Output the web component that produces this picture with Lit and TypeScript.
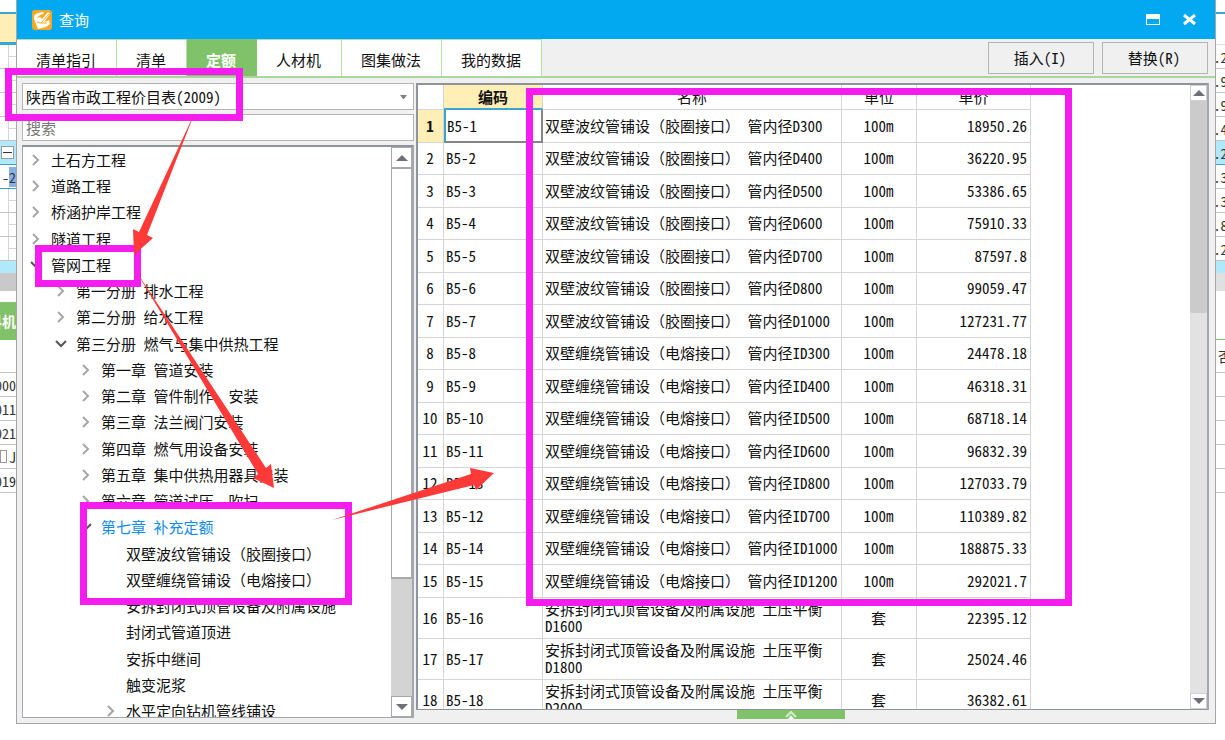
import { LitElement, html, css, svg, nothing } from "lit";
import { customElement, property } from "lit/decorators.js";
import { classMap } from "lit/directives/class-map.js";

type Row = { code: string; name: string; unit: string; price: string };
type Node = { text: string; level: number; state?: "open" | "closed"; active?: boolean };

const FONT = css`"Noto Sans Mono CJK SC", "Noto Sans CJK SC", "Liberation Mono", monospace`;

const corrugated = (d: string) => `双壁波纹管铺设（胶圈接口） 管内径${d}`;
const wound = (d: string) => `双壁缠绕管铺设（电熔接口） 管内径${d}`;
const jacking = (d: string) => `安拆封闭式顶管设备及附属设施 土压平衡 ${d}`;

const ROWS: Row[] = [
  { code: "B5-1", name: corrugated("D300"), unit: "100m", price: "18950.26" },
  { code: "B5-2", name: corrugated("D400"), unit: "100m", price: "36220.95" },
  { code: "B5-3", name: corrugated("D500"), unit: "100m", price: "53386.65" },
  { code: "B5-4", name: corrugated("D600"), unit: "100m", price: "75910.33" },
  { code: "B5-5", name: corrugated("D700"), unit: "100m", price: "87597.8" },
  { code: "B5-6", name: corrugated("D800"), unit: "100m", price: "99059.47" },
  { code: "B5-7", name: corrugated("D1000"), unit: "100m", price: "127231.77" },
  { code: "B5-8", name: wound("ID300"), unit: "100m", price: "24478.18" },
  { code: "B5-9", name: wound("ID400"), unit: "100m", price: "46318.31" },
  { code: "B5-10", name: wound("ID500"), unit: "100m", price: "68718.14" },
  { code: "B5-11", name: wound("ID600"), unit: "100m", price: "96832.39" },
  { code: "B5-13", name: wound("ID800"), unit: "100m", price: "127033.79" },
  { code: "B5-12", name: wound("ID700"), unit: "100m", price: "110389.82" },
  { code: "B5-14", name: wound("ID1000"), unit: "100m", price: "188875.33" },
  { code: "B5-15", name: wound("ID1200"), unit: "100m", price: "292021.7" },
  { code: "B5-16", name: jacking("D1600"), unit: "套", price: "22395.12" },
  { code: "B5-17", name: jacking("D1800"), unit: "套", price: "25024.46" },
  { code: "B5-18", name: jacking("D2000"), unit: "套", price: "36382.61" },
];

const NODES: Node[] = [
  { text: "土石方工程", level: 1, state: "closed" },
  { text: "道路工程", level: 1, state: "closed" },
  { text: "桥涵护岸工程", level: 1, state: "closed" },
  { text: "隧道工程", level: 1, state: "closed" },
  { text: "管网工程", level: 1, state: "open" },
  { text: "第一分册 排水工程", level: 2, state: "closed" },
  { text: "第二分册 给水工程", level: 2, state: "closed" },
  { text: "第三分册 燃气与集中供热工程", level: 2, state: "open" },
  { text: "第一章 管道安装", level: 3, state: "closed" },
  { text: "第二章 管件制作、安装", level: 3, state: "closed" },
  { text: "第三章 法兰阀门安装", level: 3, state: "closed" },
  { text: "第四章 燃气用设备安装", level: 3, state: "closed" },
  { text: "第五章 集中供热用器具安装", level: 3, state: "closed" },
  { text: "第六章 管道试压、吹扫", level: 3, state: "closed" },
  { text: "第七章 补充定额", level: 3, state: "open", active: true },
  { text: "双壁波纹管铺设（胶圈接口）", level: 4 },
  { text: "双壁缠绕管铺设（电熔接口）", level: 4 },
  { text: "安拆封闭式顶管设备及附属设施", level: 4 },
  { text: "封闭式管道顶进", level: 4 },
  { text: "安拆中继间", level: 4 },
  { text: "触变泥浆", level: 4 },
  { text: "水平定向钻机管线铺设", level: 4, state: "closed" },
];

const TABS = ["清单指引", "清单", "定额", "人材机", "图集做法", "我的数据"];

@customElement("scroll-bar")
class ScrollBar extends LitElement {
  static styles = css`
    :host { display: flex; flex-direction: column; flex: none; width: 17px; background: #e2e2e2; }
    :host([wide]) { width: 21px; background: #d3d3d3; }
    .step {
      flex: none; display: flex; align-items: center; justify-content: center;
      height: 16px; padding: 0; background: #fff; border: 1px solid #d0d0d0; box-sizing: border-box;
    }
    .thumb { background: #cbcbcb; border-radius: 0 0 2px 2px; }
    .track { min-height: 0; }
    :host([wide]) .step { height: 21px; border-color: #a9a9a9; }
    :host([wide]) .thumb { background: #fff; border: 1px solid #a9a9a9; border-bottom-width: 2px; border-radius: 0; box-sizing: border-box; }
    .short { flex: 212 1 0; }
    .rest { flex: 379 1 0; }
    :host([wide]) .short { flex: 410 1 0; }
    :host([wide]) .rest { flex: 118 1 0; }
  `;
  render() {
    return html`
      <button class="step" aria-label="向上滚动">
        <svg width="12" height="6" viewBox="0 0 12 6"><path d="M6 0L12 6H0Z" fill="#6c7078" /></svg>
      </button>
      <div class="thumb short"></div>
      <div class="track rest"></div>
      <button class="step" aria-label="向下滚动">
        <svg width="12" height="6" viewBox="0 0 12 6"><path d="M0 0H12L6 6Z" fill="#6c7078" /></svg>
      </button>
    `;
  }
}

@customElement("chapter-tree")
class ChapterTree extends LitElement {
  static styles = css`
    :host {
      display: flex; flex: 1; min-height: 0; box-sizing: border-box;
      border: 2px solid #a3a8b0; border-top-color: #8e949c; border-left-width: 1px; border-bottom-width: 1px; background: #fff;
    }
    .list { flex: 1; min-width: 0; margin: 0; padding: 0 0 0 7px; list-style: none; overflow: hidden; }
    .item { display: flex; align-items: center; height: 26px; white-space: nowrap; }
    .item:nth-child(4n) { height: 27px; }
    .l2 { padding-left: 25px; }
    .l3 { padding-left: 50px; }
    .l4 { padding-left: 75px; }
    .twisty, .gap { flex: none; width: 21px; height: 20px; }
    .twisty { display: flex; align-items: center; padding: 0; border: 0; background: none; }
    .active { color: #0f8cf0; }
  `;
  render() {
    return html`
      <ul class="list" role="tree">
        ${NODES.map((n) => html`
          <li class="item l${n.level}" role="treeitem" aria-level=${n.level}
              aria-expanded=${n.state ? String(n.state === "open") : nothing}>
            ${n.state
              ? html`<button class="twisty" aria-label=${n.state === "open" ? "折叠" : "展开"}>
                  <svg width="12" height="12" viewBox="0 0 12 12" fill="none" stroke-width="2">
                    ${n.state === "open"
                      ? svg`<path d="M1 3L6 8L11 3" stroke="#555" />`
                      : svg`<path d="M3 1L8 6L3 11" stroke="#a6a6a6" />`}
                  </svg>
                </button>`
              : html`<span class="gap"></span>`}
            <span class=${classMap({ active: !!n.active })}>${n.text}</span>
          </li>`)}
      </ul>
      <scroll-bar wide></scroll-bar>
    `;
  }
}

@customElement("price-grid")
class PriceGrid extends LitElement {
  static styles = css`
    :host {
      display: flex; flex: 1; min-width: 0; min-height: 0; box-sizing: border-box; background: #fff;
      border: 2px solid #8e949c; border-bottom-width: 1px; border-right-color: #a3a8b0;
    }
    .view { flex: 1; min-width: 0; overflow: hidden; }
    .grid { table-layout: fixed; width: 613px; border-collapse: separate; border-spacing: 0; line-height: 17px; }
    .c-num { width: 26px; }
    .c-code { width: 99px; }
    .c-name { width: 299px; }
    .c-unit { width: 75px; }
    .c-price { width: 114px; }
    th, td { box-sizing: border-box; padding: 0 2px 2px; border: 0 solid #d4d4d4; border-width: 0 1px 1px 0; font-weight: 400; }
    th { height: 25px; }
    td { height: 33px; }
    .even td { height: 32px; }
    .tall td { height: 41px; }
    .num, .unit { text-align: center; padding: 0 1px 2px 0; }
    .name { text-align: left; }
    .price { text-align: right; padding-right: 3px; }
    .on { background: #ffeeb5; font-weight: 700; }
    th.on { border-bottom: 2px solid #3aa5d0; padding-bottom: 0; }
    td.cursor { border-left: 2px solid #3aa5d0; border-right: 2px solid #858585; border-bottom: 2px solid #858585; padding: 0 0 0 1px; }
  `;
  render() {
    return html`
      <div class="view">
        <table class="grid">
          <colgroup>
            <col class="c-num" /><col class="c-code" /><col class="c-name" /><col class="c-unit" /><col class="c-price" />
          </colgroup>
          <thead>
            <tr><th></th><th class="on">编码</th><th>名称</th><th>单位</th><th>单价</th></tr>
          </thead>
          <tbody>
            ${ROWS.map((r, i) => html`
              <tr class=${classMap({ even: i % 2 === 1 && i < 15, tall: i >= 15 })}>
                <td class=${classMap({ num: true, on: i === 0 })}>${i + 1}</td>
                <td class=${classMap({ cursor: i === 0 })}>${r.code}</td>
                <td class="name">${r.name}</td>
                <td class="unit">${r.unit}</td>
                <td class="price">${r.price}</td>
              </tr>`)}
          </tbody>
        </table>
      </div>
      <scroll-bar></scroll-bar>
    `;
  }
}

@customElement("back-strip")
class BackStrip extends LitElement {
  @property() side: "left" | "right" = "left";
  static styles = css`
    :host { display: flex; flex-direction: column; min-width: 0; overflow: hidden; background: #fff; font-size: 14px; color: #333; }
    .cell {
      flex: none; display: flex; align-items: center; justify-content: flex-end; height: 24px; box-sizing: border-box;
      border-bottom: 1px solid #c4c4c4; white-space: nowrap; overflow: hidden;
    }
    .right { justify-content: center; }
    .top { height: 14px; border-bottom: 2px solid #3aa5d0; }
    .head { height: 31px; background: #ffeeb5; border-bottom: 3px solid #3aa5d0; }
    .plain { height: 31px; background: #fff; border-color: #ddd; }
    .tree::after {
      content: ""; width: 7px; height: 24px; border-left: 1px solid #d4d4d4;
      background: linear-gradient(#d4d4d4, #d4d4d4) center / 100% 1px no-repeat;
    }
    .hot { background: #b0e9fb; border-color: #3aa5d0; }
    .sel { border-color: #3aa5d0; }
    .mark { background: #86b0e6; }
    .box { width: 11px; height: 11px; border: 1px solid #999; background: #fff; display: flex; align-items: center; justify-content: center; margin-right: 2px; }
    .dash { width: 9px; height: 1px; background: #333; }
    .cyan { height: 12px; background: #b0e9fb; border: 0; }
    .gray { height: 18px; background: #c9c9c9; border: 0; }
    .gray.right { background: #e0e0e0; }
    .gap { height: 11px; border: 0; }
    .green { height: 38px; background: #80c269; color: #fff; font-weight: 700; border: 0; }
    .gap.right { height: 49px; border-bottom: 1px solid #80c269; }
    .wide { height: 33px; }
    .wide.right { justify-content: flex-start; padding-left: 2px; }
  `;
  render() {
    if (this.side === "right") {
      return html`
        <div class="cell top"></div><div class="cell plain"></div>
        ${[".2", ".9", ".9", ".4"].map((t) => html`<div class="cell right">${t}</div>`)}
        <div class="cell right hot">.2</div>
        ${[".3", ".3", ".8", ".2"].map((t) => html`<div class="cell right">${t}</div>`)}
        <div class="cell cyan"></div><div class="cell gray right"></div>
        <div class="cell gap right"></div>
        <div class="cell wide right">否</div>
        ${[1, 2, 3, 4, 5].map(() => html`<div class="cell"></div>`)}
      `;
    }
    return html`
      <div class="cell top"></div><div class="cell head"></div>
      ${[1, 2, 3, 4].map(() => html`<div class="cell tree"></div>`)}
      <div class="cell hot"><span class="box"><span class="dash"></span></span></div>
      <div class="cell sel">-<span class="mark">2</span></div>
      ${[1, 2, 3].map(() => html`<div class="cell tree"></div>`)}
      <div class="cell cyan"></div><div class="cell gray"></div>
      <div class="cell gap"></div>
      <div class="cell green">料机</div>
      <div class="cell wide"></div>
      ${["000", "011", "021"].map((t) => html`<div class="cell">${t}</div>`)}
      <div class="cell"><span class="box"></span>J</div>
      <div class="cell">019</div>
    `;
  }
}

@customElement("app-root")
class AppRoot extends LitElement {
  static styles = css`
    :host {
      display: grid; grid-template-columns: 16px minmax(0, 1fr) 9px; height: 100vh; position: relative; overflow: hidden;
      box-sizing: border-box; padding-bottom: 16px; background: #fff; color: #111;
      font-family: ${FONT}; font-size: 15px; line-height: 20px;
    }
    .dialog { display: flex; flex-direction: column; min-width: 0; min-height: 0; background: #f0f0f0; border: 1px solid #a6a6a6; border-top: 0; }
    .title { flex: none; display: flex; align-items: center; gap: 7px; height: 39px; padding: 0 18px 0 15px; background: #02a9f1; color: #fff; }
    .caption { flex: 1; margin: 0; font-size: 15px; font-weight: 400; }
    .win { display: flex; padding: 0; border: 0; background: none; margin-left: 14px; }
    .bar { flex: none; display: flex; height: 39px; box-sizing: border-box; padding-right: 7px; border-bottom: 2px solid #a9d69a; }
    .tabs { flex: 1; display: flex; }
    .tab {
      padding: 3px 20px 0 19px; border: 0 solid #b5e0a4; border-width: 1px 1px 0 0; background: #fff;
      font: inherit; color: inherit; white-space: nowrap;
    }
    .tab.current { background: #80c269; border-color: #80c269; color: #fff; font-weight: 700; }
    .actions { display: flex; gap: 8px; padding-top: 3px; }
    .act { width: 106px; height: 32px; padding: 0 2px 0 0; border: 1px solid #b4b4b4; background: #f0f0f0; font: inherit; color: inherit; }
    .main { flex: 1; display: flex; gap: 2px; min-height: 0; padding: 5px 6px 0 5px; }
    .side { flex: none; display: flex; flex-direction: column; gap: 4px; width: 392px; padding-bottom: 5px; }
    .field { position: relative; display: flex; }
    .pick, .find {
      width: 100%; height: 27px; box-sizing: border-box; margin: 0; padding: 0 3px; border: 1px solid #b4b4b4; border-radius: 0;
      background: #fff; font: inherit; color: inherit; appearance: none; outline: none;
    }
    .find::placeholder { color: #777; opacity: 1; }
    .caret { position: absolute; right: 7px; top: 12px; pointer-events: none; }
    .data { flex: 1; display: flex; flex-direction: column; min-width: 0; }
    .foot { flex: none; height: 13px; display: flex; justify-content: center; align-items: flex-start; }
    .pull { display: flex; justify-content: center; width: 108px; height: 9px; margin-right: 44px; padding: 0; border: 0; background: #80c269; }
    .frame { position: absolute; box-sizing: border-box; border: 7px solid #f51cf0; pointer-events: none; }
    .f-book { left: 5px; top: 68px; width: 238px; height: 53px; }
    .f-part { left: 35px; top: 245px; width: 106px; height: 42px; }
    .f-leaf { left: 80px; top: 502px; width: 272px; height: 103px; }
    .f-rows { left: 526px; top: 88px; width: 546px; height: 518px; }
    .arrows { position: absolute; left: 0; top: 0; pointer-events: none; }
  `;
  render() {
    return html`
      <back-strip side="left"></back-strip>
      <section class="dialog" role="dialog" aria-label="查询">
        <header class="title">
          <svg width="20" height="20" viewBox="0 0 20 20">
            <rect width="20" height="20" rx="3" fill="#f7a823" />
            <path d="M2 6C4 3 8 2 12 2L11 4C8 5 6 6 5 8L8 7L10 9L16 2L18 4L12 12L17 10L18 14L14 17L6 19L2 9Z" fill="#fff" />
            <path d="M5 12L9 13L17 4M9 13L15 13" stroke="#f7a823" stroke-width="1" fill="none" />
          </svg>
          <h1 class="caption">查询</h1>
          <button class="win" aria-label="最大化">
            <svg width="15" height="12" viewBox="0 0 15 12"><path d="M0 0H14V11H0ZM1 5V10H13V5Z" fill="#fff" fill-rule="evenodd" /></svg>
          </button>
          <button class="win" aria-label="关闭">
            <svg width="15" height="12" viewBox="0 0 15 12"><path d="M2 1L13 10M13 1L2 10" stroke="#fff" stroke-width="3" /></svg>
          </button>
        </header>
        <div class="bar">
          <nav class="tabs">
            ${TABS.map((t) => html`<button class=${classMap({ tab: true, current: t === "定额" })}>${t}</button>`)}
          </nav>
          <div class="actions">
            <button class="act">插入(I)</button>
            <button class="act">替换(R)</button>
          </div>
        </div>
        <div class="main">
          <div class="side">
            <div class="field">
              <select class="pick" aria-label="定额库"><option>陕西省市政工程价目表(2009)</option></select>
              <svg class="caret" width="7" height="4" viewBox="0 0 7 4"><path d="M0 0H7L4 4H3Z" fill="#7c808a" /></svg>
            </div>
            <div class="field"><input class="find" type="text" placeholder="搜索" aria-label="搜索" /></div>
            <chapter-tree></chapter-tree>
          </div>
          <div class="data">
            <price-grid></price-grid>
            <div class="foot">
              <button class="pull" aria-label="展开">
                <svg width="12" height="9" viewBox="0 0 12 9"><path d="M1 7L6 2L11 7" stroke="#d5ecca" stroke-width="2" fill="none" /><path d="M6 5L9 9H3Z" fill="#fff" /></svg>
              </button>
            </div>
          </div>
        </div>
      </section>
      <back-strip side="right"></back-strip>
      <div class="frame f-book"></div>
      <div class="frame f-part"></div>
      <div class="frame f-leaf"></div>
      <div class="frame f-rows"></div>
      <svg class="arrows" width="500" height="530" viewBox="0 0 500 530" fill="#fd3a38">
        <path d="M195 112L139 232L133 229L134 255L153 238L147 235Z" />
        <path d="M134 268L258 474L253 478L274 488L271 464L266 468Z" />
        <path d="M332 520L474 485L476 490L494 473L470 468L471 474Z" />
      </svg>
    `;
  }
}
